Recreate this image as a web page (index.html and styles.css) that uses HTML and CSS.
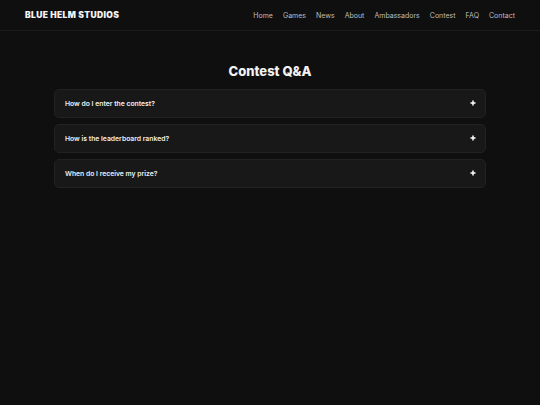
FILE: index.html
```html
<!DOCTYPE html>
<html lang="en">

<head>
    <meta charset="UTF-8">
    <meta name="viewport" content="width=device-width, initial-scale=1.0">
    <title>Contest Q&amp;A - Blue Helm Studios</title>
    <link rel="stylesheet" href="styles.css">
</head>

<body>
    <!-- Topo -->
    <header class="site-header">
        <div class="logo">BLUE HELM STUDIOS</div>
        <nav class="main-nav">
            <a href="#">Home</a>
            <a href="#">Games</a>
            <a href="#">News</a>
            <a href="#">About</a>
            <a href="#">Ambassadors</a>
            <a href="#">Contest</a>
            <a href="#">FAQ</a>
            <a href="#">Contact</a>
        </nav>
    </header>

    <!-- Perguntas -->
    <main class="faq">
        <h1>Contest Q&amp;A</h1>
        <div class="faq-item">
            <span>How do I enter the contest?</span>
            <svg class="plus" viewBox="0 0 6 6" width="6" height="6"><path d="M3 0.5V5.5M0.5 3H5.5" /></svg>
        </div>
        <div class="faq-item">
            <span>How is the leaderboard ranked?</span>
            <svg class="plus" viewBox="0 0 6 6" width="6" height="6"><path d="M3 0.5V5.5M0.5 3H5.5" /></svg>
        </div>
        <div class="faq-item">
            <span>When do I receive my prize?</span>
            <svg class="plus" viewBox="0 0 6 6" width="6" height="6"><path d="M3 0.5V5.5M0.5 3H5.5" /></svg>
        </div>
    </main>
</body>

</html>
```

FILE: styles.css
```css
* {
    box-sizing: border-box;
    margin: 0;
    padding: 0;
}

body {
    font-family: Inter, "Liberation Sans", sans-serif;
    background-color: #0f0f0f;
    color: #f2f2f2;
    height: 405px;
}

.site-header {
    display: flex;
    align-items: center;
    justify-content: space-between;
    height: 31px;
    padding: 0 25px;
    border-bottom: 1px solid #1c1c1c;
}

.logo {
    font-size: 8.5px;
    font-weight: 900;
    letter-spacing: 0.35px;
    color: #f4f4f4;
}

.main-nav {
    display: flex;
    gap: 10px;
}

.main-nav a {
    color: #bdbdbd;
    text-decoration: none;
    font-size: 7px;
}

.faq {
    width: 432px;
    margin: 0 auto;
    padding-top: 32px;
    display: flex;
    flex-direction: column;
    gap: 6px;
}

.faq h1 {
    text-align: center;
    font-size: 13px;
    font-weight: 800;
    margin-bottom: 4px;
}

.faq-item {
    display: flex;
    align-items: center;
    justify-content: space-between;
    height: 29px;
    padding: 0 9px 1px 10px;
    background-color: #181818;
    border: 1px solid #222;
    border-radius: 5px;
    font-size: 6.8px;
    font-weight: 600;
    color: #f0f0f0;
}

.plus {
    stroke: #ffffff;
    stroke-width: 1.5;
}
```
